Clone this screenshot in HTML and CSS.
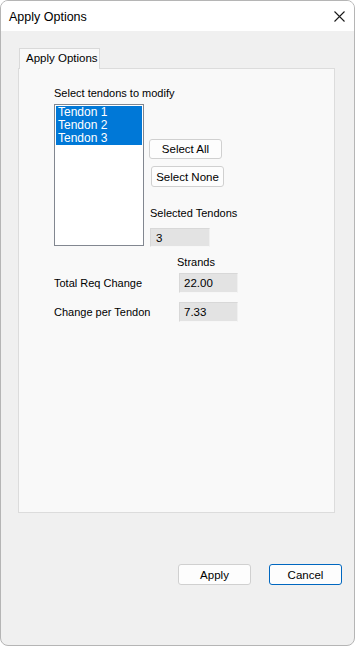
FILE: index.html
```html
<!DOCTYPE html>
<html lang="en">
<head>
    <meta charset="UTF-8">
    <meta name="viewport" content="width=device-width, initial-scale=1.0">
    <title>Apply Options</title>
    <link rel="stylesheet" href="styles.css">
</head>
<body>
<div class="window">
    <div class="titlebar">
        <span class="title">Apply Options</span>
        <span class="close">
            <svg width="11" height="11" viewBox="0 0 11 11">
                <path d="M0.5 0.5 L10.5 10.5 M10.5 0.5 L0.5 10.5" stroke="#1a1a1a" stroke-width="1.1" fill="none"/>
            </svg>
        </span>
    </div>

    <div class="dialog">
        <div class="tabs">
            <div class="tab">Apply Options</div>
        </div>
        <div class="panel">
            <div class="caption">Select tendons to modify</div>
            <div class="pick-row">
                <ul class="listbox">
                    <li class="selected">Tendon 1</li>
                    <li class="selected">Tendon 2</li>
                    <li class="selected">Tendon 3</li>
                </ul>
                <div class="side">
                    <button class="btn btn-all">Select All</button>
                    <button class="btn btn-none">Select None</button>
                    <div class="side-label">Selected Tendons</div>
                    <div class="field field-count">3</div>
                </div>
            </div>

            <div class="units">Strands</div>
            <div class="values">
                <div class="value-label">Total Req Change</div>
                <div class="field">22.00</div>
                <div class="value-label">Change per Tendon</div>
                <div class="field">7.33</div>
            </div>
        </div>

        <div class="footer">
            <button class="btn btn-footer">Apply</button>
            <button class="btn btn-footer btn-default">Cancel</button>
        </div>
    </div>
</div>
</body>
</html>
```

FILE: styles.css
```css
* {
    box-sizing: border-box;
    margin: 0;
    padding: 0;
}
body {
    background-color: #fff;
    font-family: "Liberation Sans", Arial, sans-serif;
    font-size: 11px;
    color: #000;
}
.window {
    width: 355px;
    height: 646px;
    border: 1px solid #b5b5b5;
    border-radius: 8px;
    background-color: #f0f0f0;
    overflow: hidden;
}
.titlebar {
    height: 30px;
    background-color: #fff;
    display: flex;
    align-items: center;
    justify-content: space-between;
    padding: 0 9px 0 8px;
}
.title {
    font-size: 12.5px;
    padding-top: 1px;
}
.close {
    display: flex;
}
.dialog {
    padding: 17px 19px 0 17px;
}
.tabs {
    display: flex;
    height: 20px;
    padding-left: 1px;
}
.tab {
    width: 81px;
    height: 21px;
    background-color: #f9f9f9;
    border: 1px solid #d9d9d9;
    border-bottom: none;
    padding: 3px 0 0 6px;
    font-size: 11.5px;
    position: relative;
    z-index: 1;
}
.panel {
    height: 445px;
    background-color: #f9f9f9;
    border: 1px solid #dcdcdc;
    padding: 18px 0 0 35px;
}
.caption {
    height: 13px;
    line-height: 13px;
}
.pick-row {
    display: flex;
    margin-top: 4px;
}
.listbox {
    list-style: none;
    width: 90px;
    height: 142px;
    background-color: #fff;
    border: 1px solid #828790;
    padding: 1px;
}
.listbox li {
    height: 13px;
    line-height: 13px;
    padding-left: 2px;
    font-size: 12px;
}
.listbox li.selected {
    background-color: #0078d7;
    color: #fff;
}
.side {
    display: flex;
    flex-direction: column;
    align-items: flex-start;
    padding-top: 35px;
}
.btn {
    font-family: "Liberation Sans", Arial, sans-serif;
    font-size: 11.5px;
    width: 73px;
    background-color: #fdfdfd;
    border: 1px solid #d0d0d0;
    border-radius: 3px;
    color: #000;
}
.btn-all {
    height: 20px;
    margin-left: 5px;
}
.btn-none {
    height: 21px;
    margin: 7px 0 0 7px;
}
.side-label {
    margin: 20px 0 0 6px;
    height: 13px;
    line-height: 13px;
}
.field {
    height: 20px;
    background-color: #e3e3e3;
    border: 1px solid #d8d8d8;
    border-bottom-color: #f7f7f7;
    border-right-color: #f0f0f0;
    padding: 3px 0 0 4px;
    font-size: 11.5px;
}
.field-count {
    width: 60px;
    height: 19px;
    margin: 8px 0 0 6px;
    padding-left: 5px;
}
.units {
    margin: 9px 0 0 123px;
    height: 13px;
    line-height: 13px;
}
.values {
    display: grid;
    grid-template-columns: 125px 59px;
    row-gap: 9px;
    align-items: center;
    margin-top: 4px;
}
.value-label {
    line-height: 13px;
}
.footer {
    display: flex;
    justify-content: flex-end;
    gap: 18px;
    margin-top: 51px;
    margin-right: -7px;
}
.btn-footer {
    height: 21px;
}
.btn-default {
    border-color: #0067c0;
}
```
